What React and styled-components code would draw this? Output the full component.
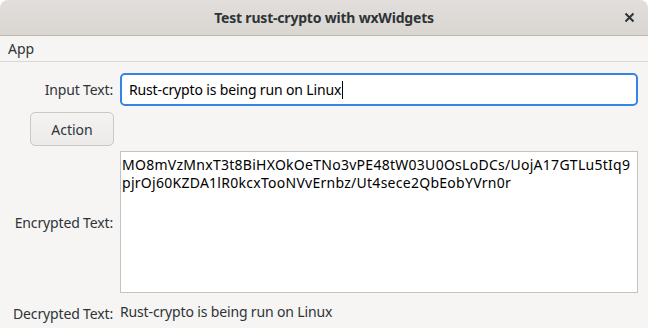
import React from "react";
import styled, { createGlobalStyle } from "styled-components";

const Global = createGlobalStyle`
  html, body { margin: 0; padding: 0; background: #ffffff; }
  body { font-family: "Noto Sans", "Open Sans", sans-serif; color: #2e3436; }
`;

const Window = styled.div`
  width: 648px;
  height: 328px;
  display: flex;
  flex-direction: column;
  background: #f6f5f4;
  border-radius: 8px 8px 0 0;
  overflow: hidden;
`;

const TitleBar = styled.div`
  height: 35px;
  flex: none;
  display: grid;
  grid-template-columns: 1fr auto 1fr;
  align-items: center;
  background: linear-gradient(#e1dedb, #dad6d2);
  border-bottom: 1px solid #bfb8b1;
  font-weight: bold;
  font-size: 14px;
  color: #2e3436;
`;

const Title = styled.div`
  grid-column: 2;
  letter-spacing: -0.2px;
`;

const CloseBtn = styled.div`
  justify-self: end;
  margin-right: 13px;
  width: 11px;
  height: 11px;
  display: flex;
`;

const MenuBar = styled.div`
  height: 25px;
  flex: none;
  display: flex;
  align-items: center;
  padding-left: 8px;
  font-size: 14px;
  border-bottom: 1px solid #dcd8d4;
  background: #f6f5f4;
`;

const Form = styled.div`
  flex: 1;
  display: grid;
  grid-template-columns: 120px 1fr;
  grid-template-rows: 33px 33px 142px auto;
  row-gap: 6px;
  padding: 11px 10px 0 0;
  font-size: 14px;
  letter-spacing: -0.15px;
`;

const Label = styled.div`
  display: flex;
  align-items: center;
  justify-content: flex-end;
  padding-right: 7px;
  color: #2e3436;
`;

const TextInput = styled.div`
  box-sizing: border-box;
  border: 2px solid #3584e4;
  border-radius: 5px;
  background: #ffffff;
  display: flex;
  align-items: center;
  padding-left: 7px;
  color: #000000;
`;

const Caret = styled.span`
  display: inline-block;
  width: 1px;
  height: 18px;
  background: #000;
  margin-left: 1px;
`;

const ButtonCell = styled.div`
  display: flex;
  justify-content: flex-end;
  padding-right: 6px;
`;

const Button = styled.button`
  width: 84px;
  height: 34px;
  box-sizing: border-box;
  border: 1px solid #cdc7c2;
  border-radius: 5px;
  background: linear-gradient(#f4f3f2, #edebe9);
  font-family: inherit;
  font-size: 14px;
  color: #2e3436;
  padding: 0;
`;

const TextArea = styled.div`
  box-sizing: border-box;
  border: 1px solid #c6c2bf;
  background: #ffffff;
  padding: 4px 1px;
  line-height: 18px;
  letter-spacing: 0.27px;
  color: #000000;
  word-break: break-all;
`;

const Value = styled.div`
  display: flex;
  align-items: center;
  height: 24px;
  color: #2e3436;
`;

export default function App() {
  return (
    <>
      <Global />
      <Window>
        <TitleBar>
          <Title>Test rust-crypto with wxWidgets</Title>
          <CloseBtn>
            <svg width="11" height="11" viewBox="0 0 11 11">
              <path d="M1.5 1.5 L9.5 9.5 M9.5 1.5 L1.5 9.5" stroke="#2e3436" strokeWidth="2" />
            </svg>
          </CloseBtn>
        </TitleBar>
        <MenuBar>App</MenuBar>
        <Form>
          <Label>Input Text:</Label>
          <TextInput>
            Rust-crypto is being run on Linux<Caret />
          </TextInput>
          <ButtonCell>
            <Button>Action</Button>
          </ButtonCell>
          <div />
          <Label>Encrypted Text:</Label>
          <TextArea>
            MO8mVzMnxT3t8BiHXOkOeTNo3vPE48tW03U0OsLoDCs/UojA17GTLu5tIq9
            <br />
            pjrOj60KZDA1lR0kcxTooNVvErnbz/Ut4sece2QbEobYVrn0r
          </TextArea>
          <Label>Decrypted Text:</Label>
          <Value>Rust-crypto is being run on Linux</Value>
        </Form>
      </Window>
    </>
  );
}
